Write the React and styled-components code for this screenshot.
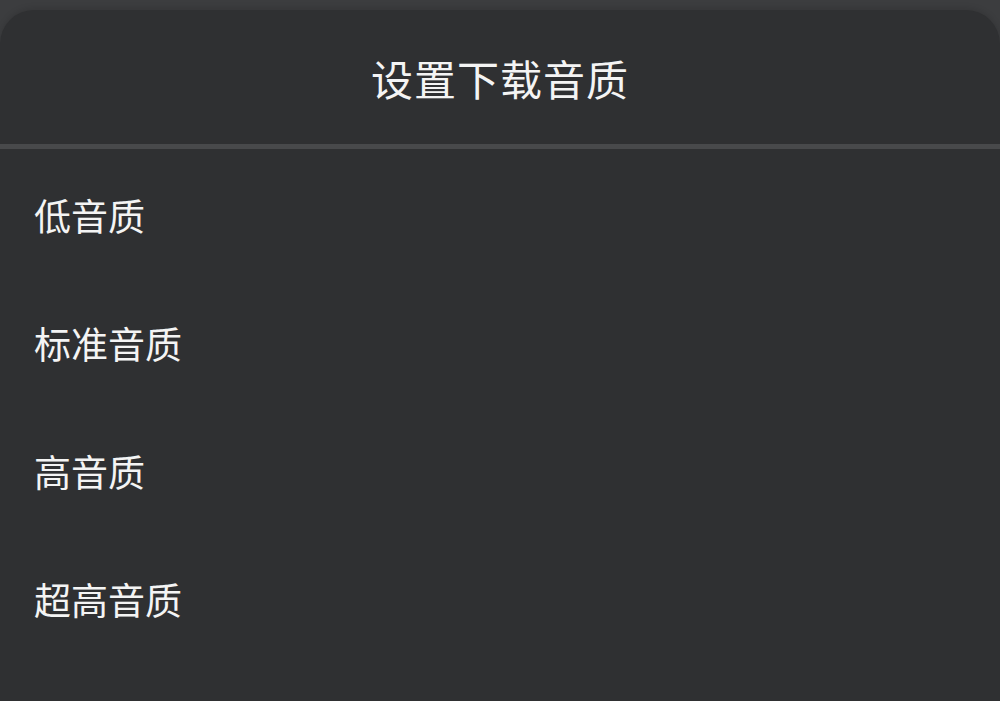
import React from "react";
import styled, { createGlobalStyle } from "styled-components";

const GlobalStyle = createGlobalStyle`
  html, body {
    margin: 0;
    padding: 0;
    background: #3c3d3f;
    font-family: "Noto Sans CJK SC", "Noto Sans", sans-serif;
  }
`;

const Sheet = styled.div`
  margin-top: 10px;
  height: 691px;
  background: #2f3032;
  border-radius: 34px 34px 0 0;
  box-shadow: 0 -2px 6px rgba(0, 0, 0, 0.12);
  display: flex;
  flex-direction: column;
  overflow: hidden;
`;

const Header = styled.div`
  height: 134px;
  display: flex;
  align-items: center;
  justify-content: center;
`;

const Title = styled.h1`
  margin: 0;
  color: #f4f4f4;
  font-size: 42px;
  font-weight: 400;
  letter-spacing: 1px;
`;

const Divider = styled.div`
  height: 5px;
  background: #48494b;
`;

const List = styled.ul`
  list-style: none;
  margin: 0;
  padding: 2px 0 0;
`;

const Item = styled.li`
  height: 128px;
  display: flex;
  align-items: center;
  padding-left: 34px;
  color: #f4f4f4;
  font-size: 37px;
  cursor: pointer;
`;

const options = ["低音质", "标准音质", "高音质", "超高音质"];

export default function App() {
  return (
    <>
      <GlobalStyle />
      <Sheet>
        <Header>
          <Title>设置下载音质</Title>
        </Header>
        <Divider />
        <List>
          {options.map((o) => (
            <Item key={o}>{o}</Item>
          ))}
        </List>
      </Sheet>
    </>
  );
}
